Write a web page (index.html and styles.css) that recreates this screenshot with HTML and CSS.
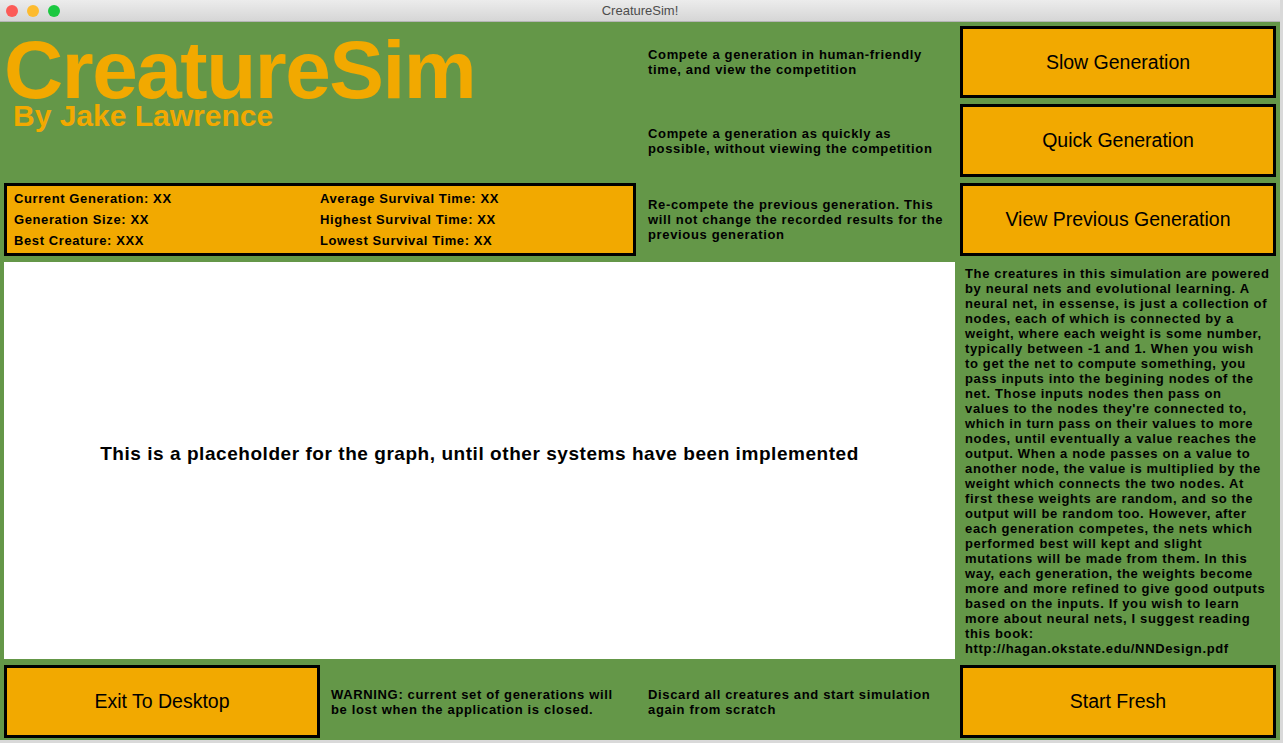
FILE: index.html
```html
<!DOCTYPE html>
<html>
<head>
<meta charset="utf-8">
<title>CreatureSim!</title>
<link rel="stylesheet" href="styles.css">
</head>
<body>
<div class="window">
  <div class="titlebar">
    <div class="lights">
      <span class="light red"></span>
      <span class="light yellow"></span>
      <span class="light green"></span>
    </div>
    <div class="wintitle">CreatureSim!</div>
  </div>
  <div class="content">
    <div class="brand">
      <div class="brand-title">CreatureSim</div>
      <div class="brand-sub">By Jake Lawrence</div>
    </div>

    <div class="desc r1">Compete a generation in human-friendly<br>time, and view the competition</div>
    <button class="btn c4 r1">Slow Generation</button>

    <div class="desc r2">Compete a generation as quickly as<br>possible, without viewing the competition</div>
    <button class="btn c4 r2">Quick Generation</button>

    <div class="stats">
      <div>Current Generation: XX</div>
      <div>Average Survival Time: XX</div>
      <div>Generation Size: XX</div>
      <div>Highest Survival Time: XX</div>
      <div>Best Creature: XXX</div>
      <div>Lowest Survival Time: XX</div>
    </div>
    <div class="desc r3">Re-compete the previous generation. This<br>will not change the recorded results for the<br>previous generation</div>
    <button class="btn c4 r3">View Previous Generation</button>

    <div class="graph">
      <p class="graph-text">This is a placeholder for the graph, until other systems have been implemented</p>
    </div>
    <div class="info">The creatures in this simulation are powered<br>by neural nets and evolutional learning. A<br>neural net, in essense, is just a collection of<br>nodes, each of which is connected by a<br>weight, where each weight is some number,<br>typically between -1 and 1. When you wish<br>to get the net to compute something, you<br>pass inputs into the begining nodes of the<br>net. Those inputs nodes then pass on<br>values to the nodes they're connected to,<br>which in turn pass on their values to more<br>nodes, until eventually a value reaches the<br>output. When a node passes on a value to<br>another node, the value is multiplied by the<br>weight which connects the two nodes. At<br>first these weights are random, and so the<br>output will be random too. However, after<br>each generation competes, the nets which<br>performed best will kept and slight<br>mutations will be made from them. In this<br>way, each generation, the weights become<br>more and more refined to give good outputs<br>based on the inputs. If you wish to learn<br>more about neural nets, I suggest reading<br>this book:<br>http://hagan.okstate.edu/NNDesign.pdf</div>

    <button class="btn exit">Exit To Desktop</button>
    <div class="desc warn">WARNING: current set of generations will<br>be lost when the application is closed.</div>
    <div class="desc r5">Discard all creatures and start simulation<br>again from scratch</div>
    <button class="btn c4 r5">Start Fresh</button>
  </div>
</div>
</body>
</html>
```

FILE: styles.css
```css
html, body {
  margin: 0;
  padding: 0;
}
body {
  background: #d9d9d9;
  width: 1283px;
  height: 743px;
  overflow: hidden;
  font-family: "Liberation Sans", Arial, sans-serif;
}
.window {
  width: 1280px;
  height: 740px;
  background: #649748;
  display: flex;
  flex-direction: column;
}
.titlebar {
  height: 21px;
  flex: 0 0 21px;
  background: linear-gradient(#ececec, #d6d6d6);
  border-bottom: 1px solid #b5b5b5;
  display: flex;
  align-items: center;
  position: relative;
}
.lights {
  display: flex;
  gap: 9px;
  padding-left: 6px;
}
.light {
  width: 12px;
  height: 12px;
  border-radius: 50%;
  display: block;
}
.red { background: #fc5b57; }
.yellow { background: #fdbb2e; }
.green { background: #1bc840; }
.wintitle {
  position: absolute;
  left: 0;
  right: 0;
  top: 3px;
  text-align: center;
  font-size: 13px;
  color: #4d4d4d;
}
.content {
  display: grid;
  grid-template-columns: 316px 316px 319px 321px;
  grid-template-rows: 72px 73px 73px 397px 73px;
  row-gap: 6px;
  column-gap: 0;
  padding: 4px 0 0 4px;
}
.brand {
  grid-column: 1 / 3;
  grid-row: 1 / 3;
  color: #f2a900;
  font-weight: bold;
}
.brand-title {
  font-size: 82px;
  letter-spacing: -1.5px;
  line-height: 68px;
  margin-top: 10px;
  margin-left: 0;
}
.brand-sub {
  font-size: 30px;
  line-height: 22px;
  margin-top: 1px;
  padding-left: 9px;
}
.desc {
  grid-column: 3;
  display: flex;
  align-items: center;
  padding-left: 12px;
  font-size: 13px;
  font-weight: bold;
  letter-spacing: 0.65px;
  line-height: 15px;
  color: #000;
  white-space: nowrap;
}
.r1 { grid-row: 1; }
.r2 { grid-row: 2; }
.r3 { grid-row: 3; }
.r5 { grid-row: 5; }
.btn {
  background: #f2a900;
  border: 3px solid #000;
  margin: 0;
  padding: 0;
  font-family: "Liberation Sans", Arial, sans-serif;
  font-size: 19.5px;
  color: #000;
  width: 316px;
  height: 100%;
  box-sizing: border-box;
}
.btn.c4 {
  grid-column: 4;
  margin-left: 5px;
}
.exit {
  grid-column: 1;
  grid-row: 5;
}
.warn {
  grid-column: 2;
  grid-row: 5;
  padding-left: 11px;
}
.stats {
  grid-column: 1 / 3;
  grid-row: 3;
  background: #f2a900;
  border: 3px solid #000;
  display: grid;
  grid-template-columns: 306px 1fr;
  grid-auto-rows: 21px;
  align-content: center;
  padding-left: 7px;
  font-size: 13px;
  font-weight: bold;
  letter-spacing: 0.6px;
  white-space: nowrap;
}
.stats div {
  line-height: 21px;
}
.graph {
  grid-column: 1 / 4;
  grid-row: 4;
  background: #fff;
  display: flex;
  align-items: center;
  justify-content: center;
}
.graph-text {
  margin: 0 0 14px 0;
  font-size: 19px;
  font-weight: bold;
  letter-spacing: 0.55px;
  color: #000;
  white-space: nowrap;
}
.info {
  grid-column: 4;
  grid-row: 4;
  margin-left: 5px;
  padding-left: 5px;
  display: flex;
  align-items: center;
  font-size: 13px;
  font-weight: bold;
  letter-spacing: 0.65px;
  line-height: 15px;
  white-space: nowrap;
}
```
